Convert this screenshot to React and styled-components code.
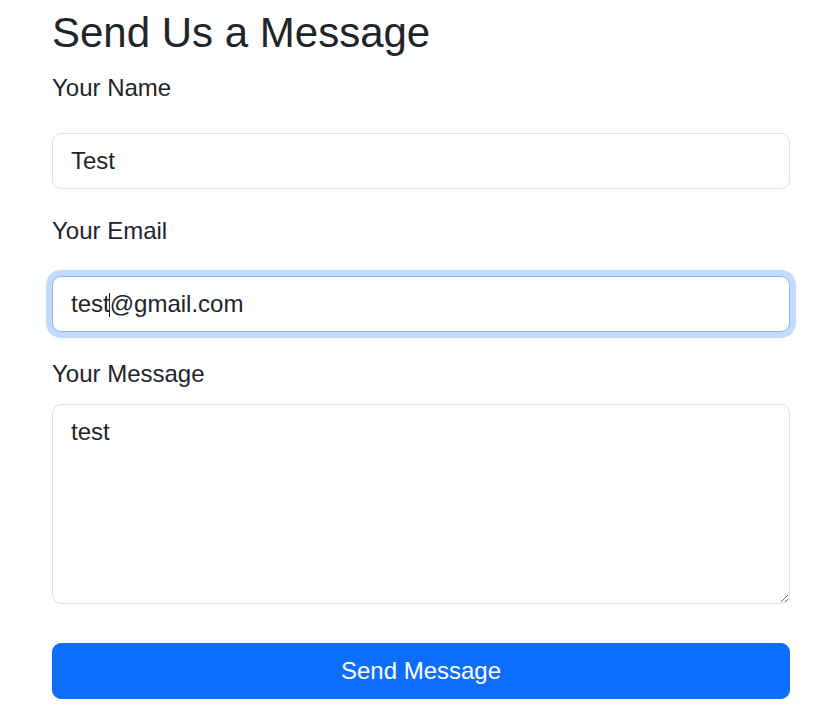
import * as React from 'react';
import styled, { createGlobalStyle, css } from 'styled-components';

const GlobalStyle = createGlobalStyle`
  *, *::before, *::after {
    box-sizing: border-box;
  }

  body {
    margin: 0;
    background: #fff;
    color: #212529;
    font-family: "Liberation Sans", Arial, sans-serif;
    font-size: 24px;
    line-height: 1.5;
  }
`;

const fields = [
  { id: 'name', label: 'Your Name', value: 'Test', type: 'text' },
  { id: 'email', label: 'Your Email', value: 'test@gmail.com', type: 'email', focused: true },
];

const App = () => (
  <>
    <GlobalStyle />
    <Page>
      <Heading>Send Us a Message</Heading>
      <Form onSubmit={(e) => e.preventDefault()}>
        {fields.map((field) => (
          <Group key={field.id}>
            <Label htmlFor={field.id}>{field.label}</Label>
            <InputWrap>
              <Input
                id={field.id}
                type={field.type}
                defaultValue={field.value}
                $focused={field.focused}
              />
              {field.focused && <Caret />}
            </InputWrap>
          </Group>
        ))}
        <Group>
          <Label htmlFor="message" $tight>
            Your Message
          </Label>
          <TextArea id="message" defaultValue="test" />
        </Group>
        <SubmitButton type="submit">Send Message</SubmitButton>
      </Form>
    </Page>
  </>
);

export default App;

const Page = styled.div`
  width: 738px;
  margin-left: 52px;
  padding-top: 8px;
`;

const Heading = styled.h3`
  margin: 0 0 12px;
  font-size: 42px;
  font-weight: 400;
  line-height: 1.2;
`;

const Form = styled.form`
  display: flex;
  flex-direction: column;
`;

const Group = styled.div`
  display: flex;
  flex-direction: column;
  margin-bottom: 24px;
`;

const Label = styled.label`
  display: block;
  margin-bottom: ${({ $tight }) => ($tight ? '12px' : '27px')};
  line-height: 36px;
`;

const InputWrap = styled.div`
  position: relative;
`;

const controlStyles = css`
  display: block;
  width: 100%;
  padding: 9px 18px;
  font-family: inherit;
  font-size: 24px;
  line-height: 36px;
  color: #212529;
  background: #fff;
  border: 1px solid #dee2e6;
  border-radius: 9px;
  outline: none;
`;

const Input = styled.input`
  ${controlStyles}
  height: 56px;

  ${({ $focused }) =>
    $focused &&
    css`
      border-color: #86b7fe;
      box-shadow: 0 0 0 6px rgba(13, 110, 253, 0.25);
    `}
`;

const Caret = styled.span`
  position: absolute;
  left: 57px;
  top: 17px;
  width: 1px;
  height: 24px;
  background: #212529;
`;

const TextArea = styled.textarea`
  ${controlStyles}
  height: 200px;
  resize: vertical;
  margin-bottom: 15px;
`;

const SubmitButton = styled.button`
  width: 100%;
  height: 56px;
  padding: 9px 18px;
  font-family: inherit;
  font-size: 24px;
  line-height: 36px;
  color: #fff;
  background: #0d6efd;
  border: 1px solid #0d6efd;
  border-radius: 9px;
  cursor: pointer;
`;
